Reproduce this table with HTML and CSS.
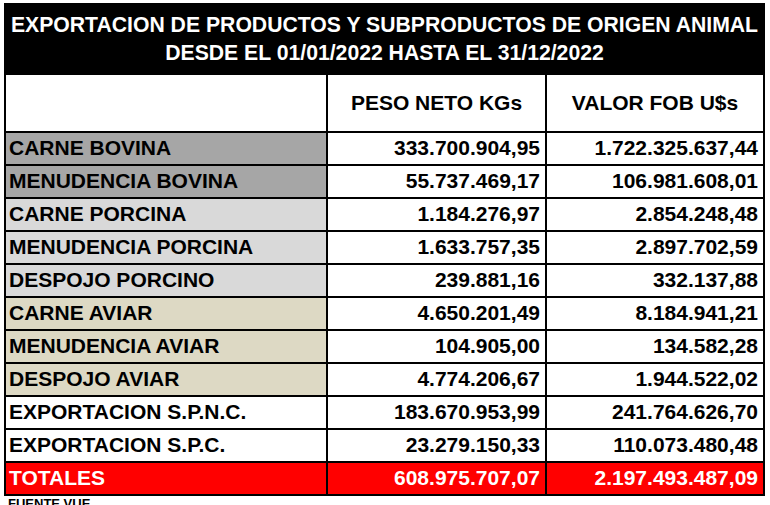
FILE: index.html
```html
<!DOCTYPE html>
<html lang="es">
<head>
<meta charset="utf-8">
<title>Exportación de productos y subproductos de origen animal</title>
<link rel="stylesheet" href="styles.css">
</head>
<body>
<div class="sheet">
  <div class="title">EXPORTACION DE PRODUCTOS Y SUBPRODUCTOS DE ORIGEN ANIMAL<br>DESDE EL 01/01/2022 HASTA EL 31/12/2022</div>

  <div class="head blank"></div>
  <div class="head">PESO NETO KGs</div>
  <div class="head">VALOR FOB U$s</div>

  <div class="label bov">CARNE BOVINA</div><div class="num">333.700.904,95</div><div class="num">1.722.325.637,44</div>
  <div class="label bov">MENUDENCIA BOVINA</div><div class="num">55.737.469,17</div><div class="num">106.981.608,01</div>
  <div class="label por">CARNE PORCINA</div><div class="num">1.184.276,97</div><div class="num">2.854.248,48</div>
  <div class="label por">MENUDENCIA PORCINA</div><div class="num">1.633.757,35</div><div class="num">2.897.702,59</div>
  <div class="label por">DESPOJO PORCINO</div><div class="num">239.881,16</div><div class="num">332.137,88</div>
  <div class="label avi">CARNE AVIAR</div><div class="num">4.650.201,49</div><div class="num">8.184.941,21</div>
  <div class="label avi">MENUDENCIA AVIAR</div><div class="num">104.905,00</div><div class="num">134.582,28</div>
  <div class="label avi">DESPOJO AVIAR</div><div class="num">4.774.206,67</div><div class="num">1.944.522,02</div>
  <div class="label">EXPORTACION S.P.N.C.</div><div class="num">183.670.953,99</div><div class="num">241.764.626,70</div>
  <div class="label">EXPORTACION S.P.C.</div><div class="num">23.279.150,33</div><div class="num">110.073.480,48</div>
  <div class="label tot">TOTALES</div><div class="num tot">608.975.707,07</div><div class="num tot">2.197.493.487,09</div>
</div>
<div class="source">FUENTE VUE</div>
</body>
</html>
```
FILE: styles.css
```css
html, body {
  margin: 0;
  padding: 0;
  background: #ffffff;
}

body {
  padding: 3px 0 0 4px;
  font-family: "Liberation Sans", Arial, sans-serif;
  font-weight: bold;
  color: #000;
}

.sheet {
  width: 757px;
  display: grid;
  grid-template-columns: 320px 217px 216px;
  grid-auto-rows: 31px;
  grid-template-rows: 68px 56px;
  gap: 2px;
  padding: 2px;
  background: #000;
}

.title {
  grid-column: 1 / 4;
  background: #000;
  color: #fff;
  font-size: 21.2px;
  line-height: 28px;
  text-align: center;
  padding-top: 8px;
  margin-top: -2px;
}

.head {
  background: #fff;
  font-size: 21px;
  line-height: 24px;
  text-align: center;
  padding-top: 16px;
}

.label,
.num {
  font-size: 21px;
  line-height: 24px;
  padding-top: 3px;
  background: #fff;
  white-space: nowrap;
}

.label {
  padding-left: 3px;
}

.num {
  text-align: right;
  padding-right: 5px;
}

.bov { background: #a6a6a6; }
.por { background: #d9d9d9; }
.avi { background: #ddd9c4; }
.tot { background: #ff0000; color: #fff; }

.source {
  font-size: 13px;
  line-height: 13px;
  padding: 1px 0 0 4px;
}
```
